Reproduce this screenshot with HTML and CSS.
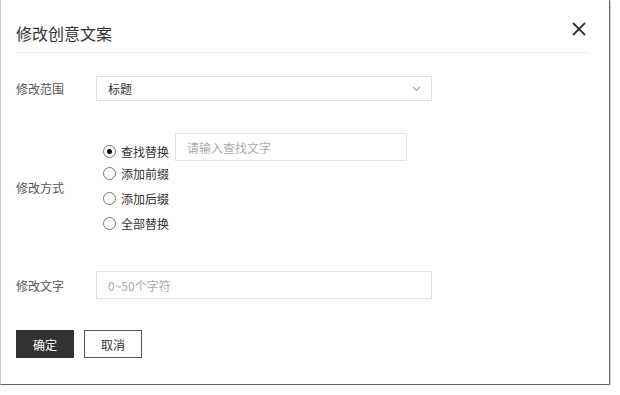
FILE: index.html
```html
<!DOCTYPE html>
<html lang="zh">
<head>
<meta charset="utf-8">
<link rel="stylesheet" href="styles.css">
</head>
<body>
<div class="dialog">
  <div class="header">
    <div class="title">修改创意文案</div>
    <button class="close" aria-label="关闭">
      <svg width="16" height="16" viewBox="0 0 16 16"><path d="M2 2 L14 14 M14 2 L2 14" stroke="#333" stroke-width="1.8" fill="none"/></svg>
    </button>
  </div>
  <div class="form">
    <div class="row row-scope">
      <div class="label">修改范围</div>
      <div class="select">
        <span>标题</span>
        <svg class="chev" width="9" height="6" viewBox="0 0 9 6"><path d="M1 1 L4.5 4.5 L8 1" stroke="#9aa3b5" stroke-width="1.1" fill="none"/></svg>
      </div>
    </div>
    <div class="row row-method">
      <div class="label label-method">修改方式</div>
      <div class="radios">
        <div class="radio-row first">
          <label class="radio"><span class="dot checked"></span>查找替换</label>
          <div class="input find"><span class="ph">请输入查找文字</span></div>
        </div>
        <div class="radio-row"><label class="radio"><span class="dot"></span>添加前缀</label></div>
        <div class="radio-row"><label class="radio"><span class="dot"></span>添加后缀</label></div>
        <div class="radio-row"><label class="radio"><span class="dot"></span>全部替换</label></div>
      </div>
    </div>
    <div class="row row-text">
      <div class="label">修改文字</div>
      <div class="input wide"><span class="ph">0~50个字符</span></div>
    </div>
    <div class="buttons">
      <button class="btn primary">确定</button>
      <button class="btn">取消</button>
    </div>
  </div>
</div>
</body>
</html>
```

FILE: styles.css
```css
html, body {
  margin: 0;
  padding: 0;
  background: #fff;
}
body {
  font-family: "Noto Sans CJK SC", "Noto Sans", sans-serif;
  font-size: 12px;
  color: #333;
}
.dialog {
  width: 608px;
  height: 384px;
  box-sizing: content-box;
  border-left: 1px solid #c8c8c8;
  border-right: 1px solid #666;
  border-bottom: 1px solid #666;
  box-shadow: 1px 1px 0 #cfcfcf;
  background: #fff;
}
.header {
  margin: 0 20px 0 15px;
  height: 53px;
  border-bottom: 1px solid #ececec;
  display: flex;
  align-items: center;
  justify-content: space-between;
  box-sizing: border-box;
}
.title {
  font-size: 16px;
  line-height: 20px;
  color: #333;
  padding-top: 14px;
}
.close {
  border: 0;
  background: none;
  padding: 0;
  margin: 6px 2px 0 0;
  width: 16px;
  height: 16px;
  display: flex;
}
.form {
  padding: 0 15px;
}
.row {
  display: flex;
  align-items: center;
}
.label {
  width: 80px;
  flex: none;
  color: #555;
  font-size: 12px;
}
.row-scope {
  margin-top: 23px;
}
.select {
  width: 336px;
  height: 25px;
  box-sizing: border-box;
  border: 1px solid #e2e2e2;
  display: flex;
  align-items: center;
  justify-content: space-between;
  padding: 0 10px 0 11px;
  color: #333;
}
.row-method {
  margin-top: 32px;
}
.label-method {
  padding-top: 5px;
}
.radios {
  margin-left: 7px;
  display: flex;
  flex-direction: column;
}
.radio-row {
  display: flex;
  align-items: center;
  height: 25px;
}
.radio-row.first {
  height: 28px;
  align-items: flex-end;
}
.radio {
  display: flex;
  align-items: center;
  height: 20px;
  color: #333;
}
.first .radio {
  height: 19px;
}
.dot {
  width: 13px;
  height: 13px;
  box-sizing: border-box;
  border: 1px solid #777;
  border-radius: 50%;
  margin-right: 5px;
  display: flex;
  align-items: center;
  justify-content: center;
}
.dot.checked::after {
  content: "";
  width: 5px;
  height: 5px;
  border-radius: 50%;
  background: #111;
}
.input {
  height: 28px;
  box-sizing: border-box;
  border: 1px solid #e2e2e2;
  display: flex;
  align-items: center;
  padding-left: 11px;
}
.find {
  width: 232px;
  margin-left: 6px;
  align-self: flex-start;
}
.wide {
  width: 336px;
}
.ph {
  color: #aaa;
}
.row-text {
  margin-top: 35px;
}
.buttons {
  margin-top: 31px;
  display: flex;
  gap: 10px;
}
.btn {
  width: 58px;
  height: 28px;
  box-sizing: border-box;
  border: 1px solid #555;
  background: #fff;
  color: #333;
  font-family: inherit;
  font-size: 12px;
  padding: 0;
}
.btn.primary {
  background: #333;
  border-color: #333;
  color: #fff;
}
```
